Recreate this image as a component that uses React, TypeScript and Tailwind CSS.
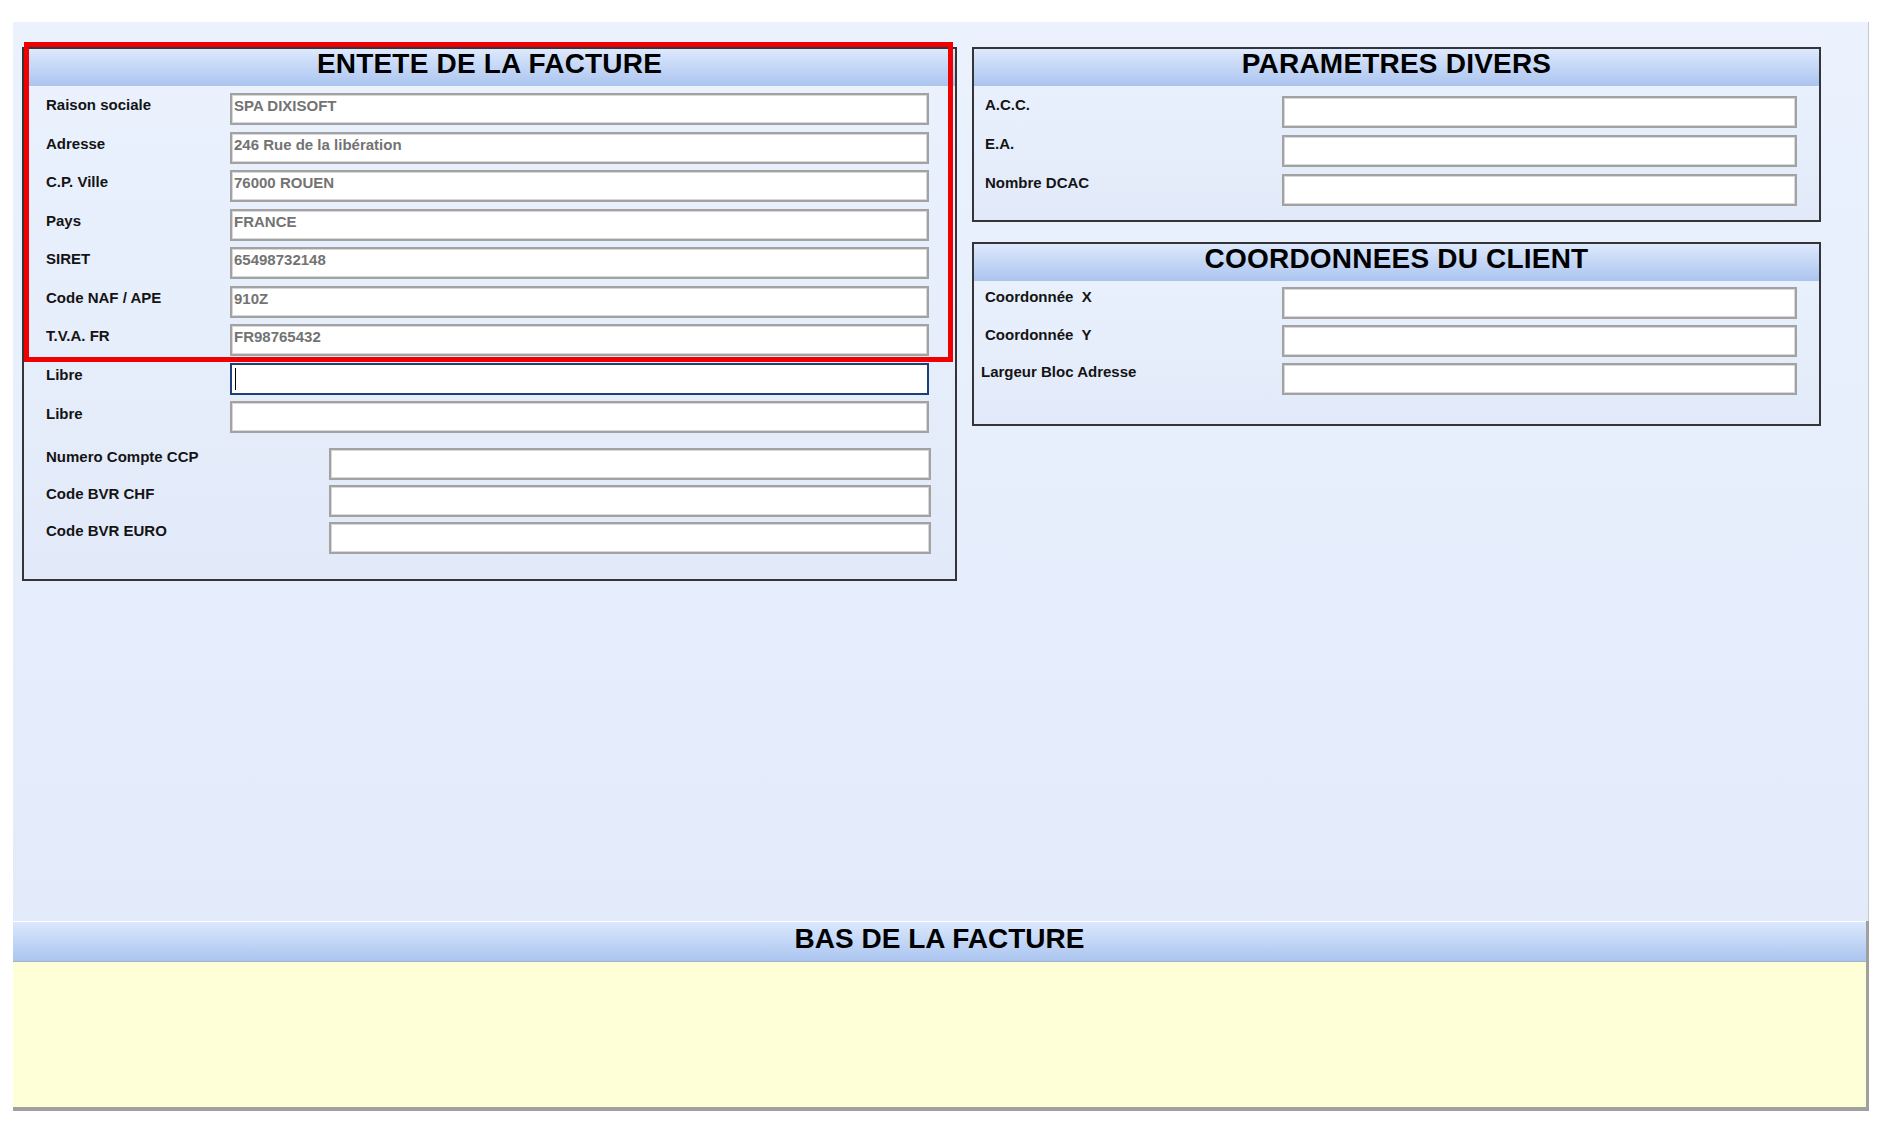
import React from "react";

const font = "font-['Liberation_Sans',Arial,sans-serif]";

function Header({ title }: { title: string }) {
  return (
    <div className="h-[37px] pb-[7px] bg-linear-to-b from-[#dde9fd] to-[#abc4ef] flex items-center justify-center">
      <span className="text-[28px] font-bold text-black leading-none tracking-[0.2px]">{title}</span>
    </div>
  );
}

function Field({
  label,
  value,
  labelW,
  inputW,
  labelPt = "pt-[3px]",
  focused = false,
  labelClass = "",
}: {
  label: string;
  value?: string;
  labelW: string;
  inputW: string;
  labelPt?: string;
  focused?: boolean;
  labelClass?: string;
}) {
  return (
    <div className="flex items-start">
      <div className={`${labelW} ${labelPt} ${labelClass} text-[15px] font-bold text-[#141414] leading-[17px] whitespace-pre`}>
        {label}
      </div>
      <div
        className={`${inputW} h-[32px] bg-white flex items-center pl-[2px] ${
          focused
            ? "border-2 border-[#1d3f7c]"
            : "border-2 border-[#a2a2a2] shadow-[inset_0_0_0_1px_#d8d8d8]"
        }`}
      >
        {focused ? <div className="w-[1px] h-[22px] bg-black ml-[1px]" /> : null}
        {value ? (
          <span className="text-[15px] font-bold text-[#737373] leading-none mb-[7px]">{value}</span>
        ) : null}
      </div>
    </div>
  );
}

export default function App() {
  const top = [
    ["Raison sociale", "SPA DIXISOFT"],
    ["Adresse", "246 Rue de la libération"],
    ["C.P. Ville", "76000 ROUEN"],
    ["Pays", "FRANCE"],
    ["SIRET", "65498732148"],
    ["Code NAF / APE", "910Z"],
    ["T.V.A. FR", "FR98765432"],
  ];
  return (
    <div className={`${font} w-[1890px] h-[1126px] bg-white relative overflow-hidden`}>
      <div className="h-[22px]" />
      {/* main blue area */}
      <div className="ml-[13px] w-[1856px] h-[899px] border-r border-[#c4c9d2] bg-linear-to-b from-[#ebf2fe] to-[#e3ebfb] pl-[9px] pt-[25px] flex items-start gap-[15px]">
        {/* Panel 1 */}
        <div className="w-[935px] border-2 border-[#353535] bg-linear-to-b from-[#ebf2fe] to-[#e2eaf9]">
          <Header title="ENTETE DE LA FACTURE" />
          <div className="pl-[22px] pt-[7px] pb-[25px]">
            <div className="flex flex-col gap-[6.5px]">
              {top.map(([l, v]) => (
                <Field key={l} label={l} value={v} labelW="w-[184px]" inputW="w-[699px]" />
              ))}
              <Field label="Libre" labelW="w-[184px]" inputW="w-[699px]" focused />
              <Field label="Libre" labelW="w-[184px]" inputW="w-[699px]" labelPt="pt-[4px]" />
            </div>
            <div className="flex flex-col gap-[5px] mt-[15px]">
              <Field label="Numero Compte CCP" labelW="w-[283px]" inputW="w-[602px]" labelPt="pt-0" />
              <Field label="Code BVR CHF" labelW="w-[283px]" inputW="w-[602px]" labelPt="pt-0" />
              <Field label="Code BVR EURO" labelW="w-[283px]" inputW="w-[602px]" labelPt="pt-0" />
            </div>
          </div>
        </div>

        {/* Right column */}
        <div className="w-[849px] flex flex-col gap-[20px]">
          <div className="border-2 border-[#353535] bg-linear-to-b from-[#ebf2fe] to-[#e2eaf9]">
            <Header title="PARAMETRES DIVERS" />
            <div className="pl-[11px] pt-[10px] pb-[14px] flex flex-col gap-[7px]">
              <Field label="A.C.C." labelW="w-[297px]" inputW="w-[515px]" labelPt="pt-0" />
              <Field label="E.A." labelW="w-[297px]" inputW="w-[515px]" labelPt="pt-0" />
              <Field label="Nombre DCAC" labelW="w-[297px]" inputW="w-[515px]" labelPt="pt-0" />
            </div>
          </div>
          <div className="border-2 border-[#353535] bg-linear-to-b from-[#ebf2fe] to-[#e2eaf9]">
            <Header title="COORDONNEES DU CLIENT" />
            <div className="pl-[11px] pt-[6px] pb-[29px] flex flex-col gap-[6px]">
              <Field label="Coordonnée  X" labelW="w-[297px]" inputW="w-[515px]" labelPt="pt-[1px]" />
              <Field label="Coordonnée  Y" labelW="w-[297px]" inputW="w-[515px]" labelPt="pt-[1px]" />
              <Field
                label="Largeur Bloc Adresse"
                labelW="w-[297px]"
                inputW="w-[515px]"
                labelPt="pt-0"
                labelClass="-ml-[4px] mr-[4px]"
              />
            </div>
          </div>
        </div>
      </div>

      {/* Bottom section */}
      <div className="ml-[13px] w-[1856px] border-r-[3px] border-b-[4px] border-[#a0a0a0]">
        <div className="h-[41px] pb-[5px] border-t border-white border-b border-b-[#a7b2c4] bg-linear-to-b from-[#dbe8fd] to-[#abc5ef] flex items-center justify-center">
          <span className="text-[28px] font-bold text-black leading-none">BAS DE LA FACTURE</span>
        </div>
        <div className="h-[145px] bg-[#ffffd7]" />
      </div>

      {/* red highlight annotation */}
      <div className="absolute left-[24px] top-[42px] w-[929px] h-[320px] border-[5px] border-[#f00000] pointer-events-none" />
    </div>
  );
}
